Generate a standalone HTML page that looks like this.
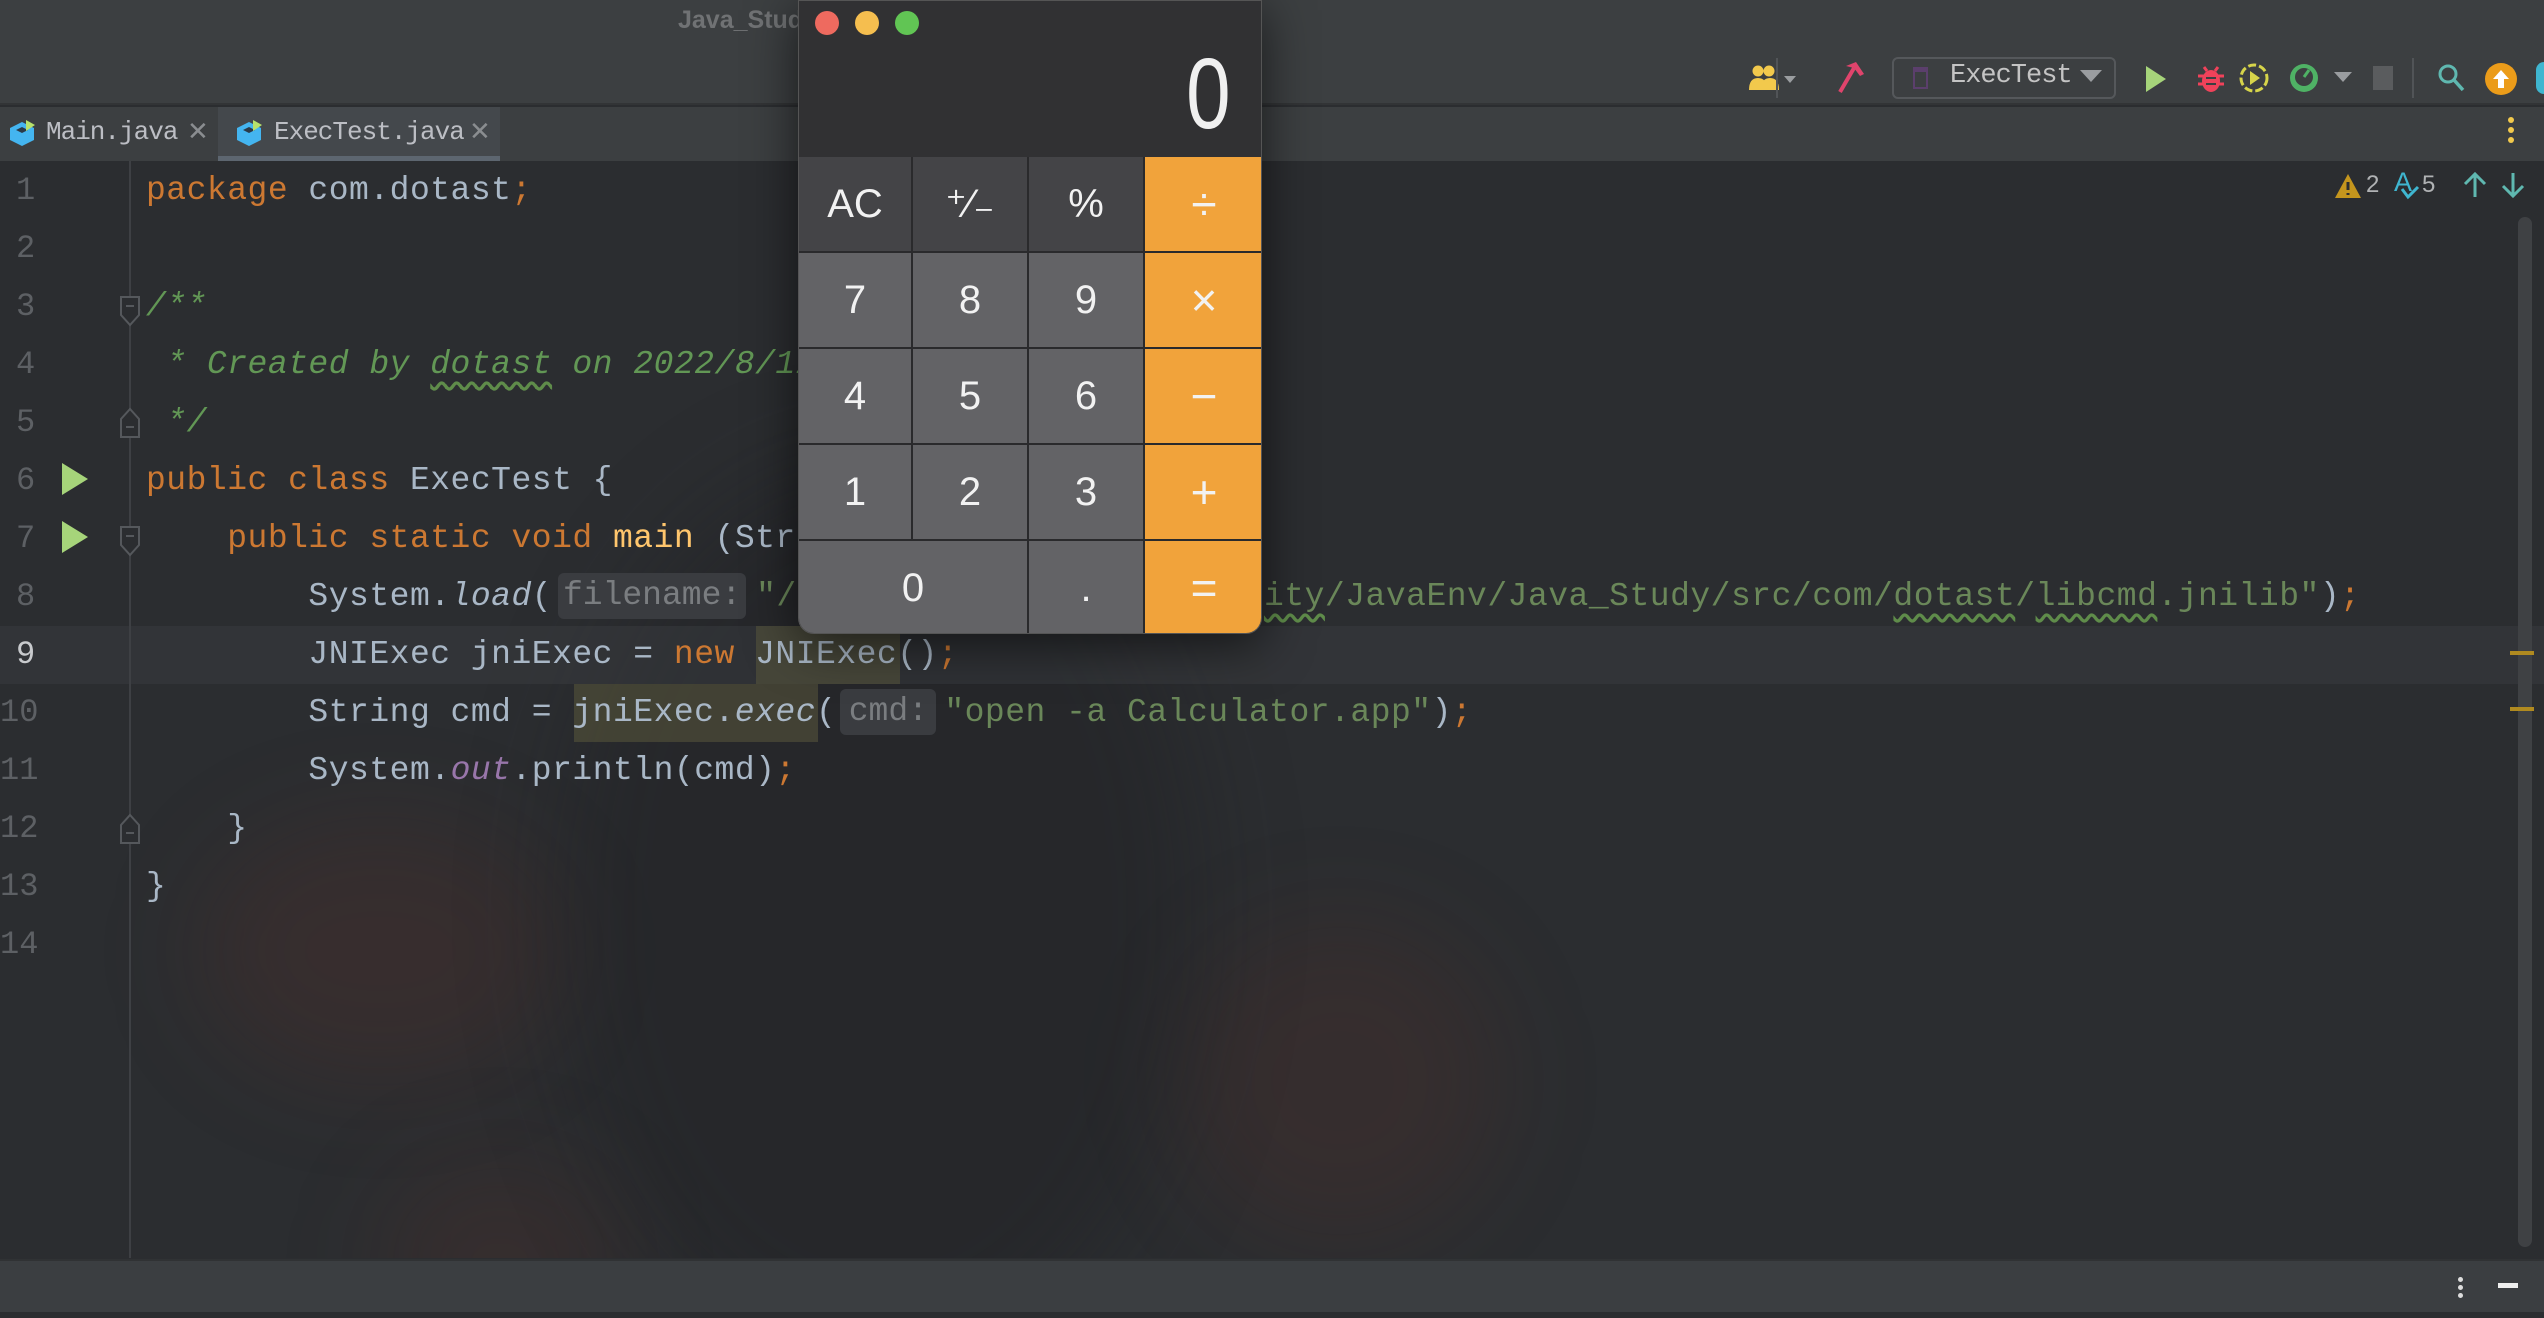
<!DOCTYPE html>
<html><head><meta charset="utf-8"><style>
*{margin:0;padding:0;box-sizing:border-box}
body{width:2544px;height:1318px;overflow:hidden;background:#2b2d30;position:relative;font-family:"Liberation Mono",monospace}
.abs{position:absolute}
#top{left:0;top:0;width:2544px;height:105px;background:#3c3f41;border-bottom:2px solid #323436}
#tabs{left:0;top:107px;width:2544px;height:54px;background:#3c3f41}
#ed{left:0;top:161px;width:2544px;height:1097px;background:#2b2d30;overflow:hidden}
.glow{position:absolute;border-radius:50%;filter:blur(50px)}
#bot{left:0;top:1259px;width:2544px;height:53px;background:#3b3e41;border-top:2px solid #303234}
#bot2{left:0;top:1312px;width:2544px;height:6px;background:#2b2d30}
.ln{position:absolute;left:0;width:50px;font-size:32px;color:#5d6064;line-height:58px;text-align:left;padding-left:16px}
.cl{position:absolute;left:146px;font-size:33px;letter-spacing:0.5px;line-height:58px;color:#a9b7c6;white-space:pre}
.k{color:#cc7832}.c{color:#629755;font-style:italic}.s{color:#6a8759}.p{color:#9876aa;font-style:italic}.m{color:#ffc66d}.i{font-style:italic}
.h{display:inline-block;background:#3a3c40;color:#7a7d80;border-radius:6px;line-height:46px;vertical-align:middle;text-align:center;letter-spacing:0}
.w{text-decoration:underline wavy #5f8c4a;text-underline-offset:8px}
#calc{left:798px;top:0;width:464px;height:634px;border-radius:0 0 16px 16px;overflow:hidden;background:#2a2a2c;box-shadow:0 10px 50px rgba(0,0,0,.6);border:1px solid #555}
.b{position:absolute;display:flex;align-items:center;justify-content:center;color:#f2f2f2;font-family:"Liberation Sans",sans-serif;font-size:40px}
.d{background:#444447}.n{background:#636366}.o{background:#f1a33b;font-size:46px}
</style></head><body>
<div id="top" class="abs">
 <div class="abs" style="left:678px;top:6px;font:bold 25px 'Liberation Sans',sans-serif;color:#707274">Java_Study</div>
 <svg class="abs" style="left:1748px;top:64px" width="60" height="30"><circle cx="10" cy="7" r="5.5" fill="#f2c94c"/><circle cx="21" cy="7" r="5.5" fill="#f2c94c"/><path d="M1 26 Q1 14 10 14 Q19 14 19 26Z M13 26 Q13 14 22 14 Q31 14 31 26Z" fill="#f2c94c"/><path d="M36 12 L48 12 L42 19Z" fill="#9a9da0"/></svg>
 <div class="abs" style="left:1776px;top:58px;width:2px;height:40px;background:#515457"></div>
 <svg class="abs" style="left:1836px;top:60px" width="30" height="34"><path d="M4 32 L18 8" stroke="#e0446c" stroke-width="4"/><path d="M10 6 L20 2 L28 14 L24 16 L18 8Z" fill="#e0446c"/></svg>
 <div class="abs" style="left:1892px;top:57px;width:224px;height:42px;border:2px solid #55585b;border-radius:6px;background:#3c3f41"></div>
 <div class="abs" style="left:1913px;top:67px;width:15px;height:22px;border:2px solid #5b3f6c;border-top-width:5px"></div>
 <div class="abs" style="left:1950px;top:61px;font:27px 'Liberation Mono',monospace;color:#c4c4c4;letter-spacing:-1px">ExecTest</div>
 <svg class="abs" style="left:2080px;top:70px" width="22" height="14"><path d="M0 0 L22 0 L11 12Z" fill="#9a9da0"/></svg>
 <svg class="abs" style="left:2144px;top:64px" width="24" height="30"><path d="M2 2 L22 15 L2 28Z" fill="#a6d47a"/></svg>
 <svg class="abs" style="left:2196px;top:64px" width="30" height="30"><ellipse cx="15" cy="17" rx="9" ry="11" fill="#f0425a"/><path d="M2 12 H28 M2 20 H28 M8 3 L11 7 M22 3 L19 7" stroke="#f0425a" stroke-width="3"/><path d="M10 14 H20 M10 20 H20" stroke="#3c3f41" stroke-width="2"/></svg>
 <svg class="abs" style="left:2238px;top:62px" width="32" height="32"><circle cx="16" cy="16" r="13" fill="none" stroke="#d6d44a" stroke-width="3" stroke-dasharray="8 3"/><path d="M12 9 L22 16 L12 23Z" fill="#d6d44a"/></svg>
 <svg class="abs" style="left:2288px;top:62px" width="32" height="32"><circle cx="16" cy="16" r="14" fill="#4fb265"/><circle cx="16" cy="15" r="9" fill="#3c3f41"/><path d="M16 15 L21 8" stroke="#4fb265" stroke-width="3"/></svg>
 <svg class="abs" style="left:2334px;top:72px" width="18" height="12"><path d="M0 0 L18 0 L9 10Z" fill="#9a9da0"/></svg>
 <div class="abs" style="left:2373px;top:66px;width:20px;height:24px;background:#5a5c5e"></div>
 <div class="abs" style="left:2412px;top:58px;width:2px;height:40px;background:#515457"></div>
 <svg class="abs" style="left:2436px;top:62px" width="30" height="32"><circle cx="12" cy="12" r="8" fill="none" stroke="#5fb8b0" stroke-width="3"/><path d="M18 18 L27 28" stroke="#5fb8b0" stroke-width="3.5"/></svg>
 <svg class="abs" style="left:2484px;top:62px" width="34" height="34"><circle cx="17" cy="17" r="16" fill="#eb9c1a"/><path d="M17 8 L25 17 H20 V26 H14 V17 H9Z" fill="#fff"/></svg>
 <div class="abs" style="left:2536px;top:62px;width:16px;height:32px;border-radius:16px;background:#3fb6d0"></div>
</div>
<div id="tabs" class="abs">
 <div class="abs" style="left:218px;top:0;width:282px;height:54px;background:#44484c;border-bottom:5px solid #5d6670"></div>
 <svg class="abs" style="left:9px;top:11px" width="28" height="30"><path d="M13 4 L25 10 V22 L13 28 L1 22 V10Z" fill="#44b5f0"/><path d="M7 12 L13 9 L19 12 L13 15Z" fill="#2b3a48"/><path d="M17 2 L26 7 L17 13Z" fill="#b7e26b"/></svg>
 <div class="abs" style="left:46px;top:10px;font-size:26px;color:#bcbec4;letter-spacing:-1px">Main.java</div>
 <div class="abs" style="left:187px;top:9px;font:26px 'Liberation Sans',sans-serif;color:#8a8d90">✕</div>
 <svg class="abs" style="left:236px;top:11px" width="28" height="30"><path d="M13 4 L25 10 V22 L13 28 L1 22 V10Z" fill="#44b5f0"/><path d="M7 12 L13 9 L19 12 L13 15Z" fill="#2b3a48"/><path d="M17 2 L26 7 L17 13Z" fill="#b7e26b"/></svg>
 <div class="abs" style="left:274px;top:10px;font-size:26px;color:#bcbec4;letter-spacing:-1px">ExecTest.java</div>
 <div class="abs" style="left:469px;top:9px;font:26px 'Liberation Sans',sans-serif;color:#8a8d90">✕</div>
 <div class="abs" style="left:2508px;top:10px;width:6px;height:6px;border-radius:3px;background:#f2c94c;box-shadow:0 10px 0 #f2c94c,0 20px 0 #f2c94c"></div>
</div>
<div id="ed" class="abs">
 <div class="glow" style="left:200px;top:660px;width:360px;height:260px;background:rgba(120,50,38,.16)"></div>
 <div class="glow" style="left:380px;top:1000px;width:240px;height:200px;background:rgba(120,50,38,.14)"></div>
 <div class="glow" style="left:1180px;top:760px;width:320px;height:320px;background:rgba(120,50,38,.14)"></div>
 <div class="glow" style="left:560px;top:300px;width:640px;height:900px;background:rgba(28,28,30,.3)"></div>
 <div class="abs" style="left:0;top:465px;width:2544px;height:58px;background:rgba(60,62,66,.45)"></div>
 <div class="abs" style="left:129px;top:0;width:2px;height:1097px;background:#3e4044"></div>
 <div class="abs" style="left:2518px;top:56px;width:14px;height:1030px;border-radius:7px;background:#3f4144"></div>
 <div class="abs" style="left:2510px;top:490px;width:24px;height:4px;background:#b08a20"></div>
 <div class="abs" style="left:2510px;top:546px;width:24px;height:4px;background:#b08a20"></div>
 <svg class="abs" style="left:2334px;top:12px" width="28" height="26"><path d="M14 1 L27 25 H1Z" fill="#c4951d"/><path d="M14 9 V17 M14 20 V22" stroke="#2b2d30" stroke-width="3"/></svg>
 <div class="abs" style="left:2366px;top:10px;font:24px 'Liberation Sans',sans-serif;color:#b0b2b4">2</div>
 <div class="abs" style="left:2394px;top:6px;font:27px 'Liberation Sans',sans-serif;color:#3fb6d0">A</div>
 <svg class="abs" style="left:2400px;top:24px" width="20" height="16"><path d="M2 4 L8 12 L18 2" stroke="#3fb6d0" stroke-width="3" fill="none"/></svg>
 <div class="abs" style="left:2422px;top:10px;font:24px 'Liberation Sans',sans-serif;color:#b0b2b4">5</div>
 <svg class="abs" style="left:2462px;top:10px" width="26" height="28"><path d="M13 26 V3 M3 13 L13 3 L23 13" stroke="#5fb8b0" stroke-width="3" fill="none"/></svg>
 <svg class="abs" style="left:2500px;top:10px" width="26" height="28"><path d="M13 2 V25 M3 15 L13 25 L23 15" stroke="#5fb8b0" stroke-width="3" fill="none"/></svg>
 <svg class="abs" style="left:60px;top:300px" width="30" height="36"><path d="M2 2 L28 18 L2 34Z" fill="#a6d47a"/></svg>
 <svg class="abs" style="left:60px;top:358px" width="30" height="36"><path d="M2 2 L28 18 L2 34Z" fill="#a6d47a"/></svg>
 <svg class="abs" style="left:119px;top:134px" width="22" height="34"><path d="M2 2 H20 V20 L11 30 L2 20Z" fill="#2b2d30" stroke="#55585c" stroke-width="2"/><path d="M7 11 H15" stroke="#55585c" stroke-width="2"/></svg>
 <svg class="abs" style="left:119px;top:244px" width="22" height="34"><path d="M2 32 H20 V14 L11 4 L2 14Z" fill="#2b2d30" stroke="#55585c" stroke-width="2"/><path d="M7 22 H15" stroke="#55585c" stroke-width="2"/></svg>
 <svg class="abs" style="left:119px;top:364px" width="22" height="34"><path d="M2 2 H20 V20 L11 30 L2 20Z" fill="#2b2d30" stroke="#55585c" stroke-width="2"/><path d="M7 11 H15" stroke="#55585c" stroke-width="2"/></svg>
 <svg class="abs" style="left:119px;top:650px" width="22" height="34"><path d="M2 32 H20 V14 L11 4 L2 14Z" fill="#2b2d30" stroke="#55585c" stroke-width="2"/><path d="M7 22 H15" stroke="#55585c" stroke-width="2"/></svg>
 <div class="abs" style="left:756px;top:465px;width:144px;height:58px;background:rgba(90,88,60,.55)"></div>
 <div class="abs" style="left:574px;top:523px;width:244px;height:58px;background:rgba(90,88,60,.55)"></div>
</div>
<div style="position:absolute;left:0;top:162px;width:2544px">
 <div class="ln" style="top:0">1</div><div class="ln" style="top:58px">2</div><div class="ln" style="top:116px">3</div><div class="ln" style="top:174px">4</div><div class="ln" style="top:232px">5</div><div class="ln" style="top:290px">6</div><div class="ln" style="top:348px">7</div><div class="ln" style="top:406px">8</div><div class="ln" style="top:464px;color:#c8cacd">9</div><div class="ln" style="top:522px;padding-left:0">10</div><div class="ln" style="top:580px;padding-left:0">11</div><div class="ln" style="top:638px;padding-left:0">12</div><div class="ln" style="top:696px;padding-left:0">13</div><div class="ln" style="top:754px;padding-left:0">14</div>
 <div class="cl" style="top:0"><span class="k">package</span> com.dotast<span class="k">;</span></div>
 <div class="cl" style="top:116px"><span class="c">/**</span></div>
 <div class="cl" style="top:174px"><span class="c"> * Created by <span class="w">dotast</span> on 2022/8/11</span></div>
 <div class="cl" style="top:232px"><span class="c"> */</span></div>
 <div class="cl" style="top:290px"><span class="k">public class</span> ExecTest {</div>
 <div class="cl" style="top:348px">    <span class="k">public static void</span> <span class="m">main</span> (String[] args) {</div>
 <div class="cl" style="top:406px">        System.<span class="i">load</span>(<span class="h" style="width:188px;margin:0 10px 0 6px">filename:</span><span class="s">"/Users/dotast/D</span></div>
 <div class="cl" style="top:406px;left:1264px"><span class="s"><span class="w">ity</span>/JavaEnv/Java_Study/src/com/<span class="w">dotast</span>/<span class="w">libcmd</span>.jnilib"</span>)<span class="k">;</span></div>
 <div class="cl" style="top:464px">        JNIExec jniExec = <span class="k">new</span> JNIExec()<span class="k">;</span></div>
 <div class="cl" style="top:522px">        String cmd = jniExec.<span class="i">exec</span>(<span class="h" style="width:96px;margin:0 8px 0 4px">cmd:</span><span class="s">"open -a Calculator.app"</span>)<span class="k">;</span></div>
 <div class="cl" style="top:580px">        System.<span class="p">out</span>.println(cmd)<span class="k">;</span></div>
 <div class="cl" style="top:638px">    }</div>
 <div class="cl" style="top:696px">}</div>
</div>
<div id="bot" class="abs">
 <div class="abs" style="left:2458px;top:16px;width:5px;height:5px;border-radius:3px;background:#ddd;box-shadow:0 8px 0 #ddd,0 16px 0 #ddd"></div>
 <div class="abs" style="left:2498px;top:22px;width:20px;height:5px;background:#eee"></div>
</div>
<div id="bot2" class="abs"></div>
<div id="calc" class="abs">
 <div class="abs" style="left:0;top:0;width:464px;height:156px;background:#313133"></div>
 <div class="abs" style="left:16px;top:10px;width:24px;height:24px;border-radius:12px;background:#ee6a5f"></div>
 <div class="abs" style="left:56px;top:10px;width:24px;height:24px;border-radius:12px;background:#f5be4f"></div>
 <div class="abs" style="left:96px;top:10px;width:24px;height:24px;border-radius:12px;background:#61c554"></div>
 <div class="abs" style="right:30px;top:38px;font:100px 'Liberation Sans',sans-serif;color:#f0f0f0;line-height:110px;transform:scaleX(.8);transform-origin:right">0</div>
 <div class="b d" style="left:0;top:156px;width:112px;height:94px">AC</div>
 <div class="b d" style="left:114px;top:156px;width:114px;height:94px">⁺∕₋</div>
 <div class="b d" style="left:230px;top:156px;width:114px;height:94px">%</div>
 <div class="b o" style="left:346px;top:156px;width:118px;height:94px">÷</div>
 <div class="b n" style="left:0;top:252px;width:112px;height:94px">7</div>
 <div class="b n" style="left:114px;top:252px;width:114px;height:94px">8</div>
 <div class="b n" style="left:230px;top:252px;width:114px;height:94px">9</div>
 <div class="b o" style="left:346px;top:252px;width:118px;height:94px">×</div>
 <div class="b n" style="left:0;top:348px;width:112px;height:94px">4</div>
 <div class="b n" style="left:114px;top:348px;width:114px;height:94px">5</div>
 <div class="b n" style="left:230px;top:348px;width:114px;height:94px">6</div>
 <div class="b o" style="left:346px;top:348px;width:118px;height:94px">−</div>
 <div class="b n" style="left:0;top:444px;width:112px;height:94px">1</div>
 <div class="b n" style="left:114px;top:444px;width:114px;height:94px">2</div>
 <div class="b n" style="left:230px;top:444px;width:114px;height:94px">3</div>
 <div class="b o" style="left:346px;top:444px;width:118px;height:94px">+</div>
 <div class="b n" style="left:0;top:540px;width:228px;height:94px">0</div>
 <div class="b n" style="left:230px;top:540px;width:114px;height:94px">.</div>
 <div class="b o" style="left:346px;top:540px;width:118px;height:94px">=</div>
</div>
</body></html>
